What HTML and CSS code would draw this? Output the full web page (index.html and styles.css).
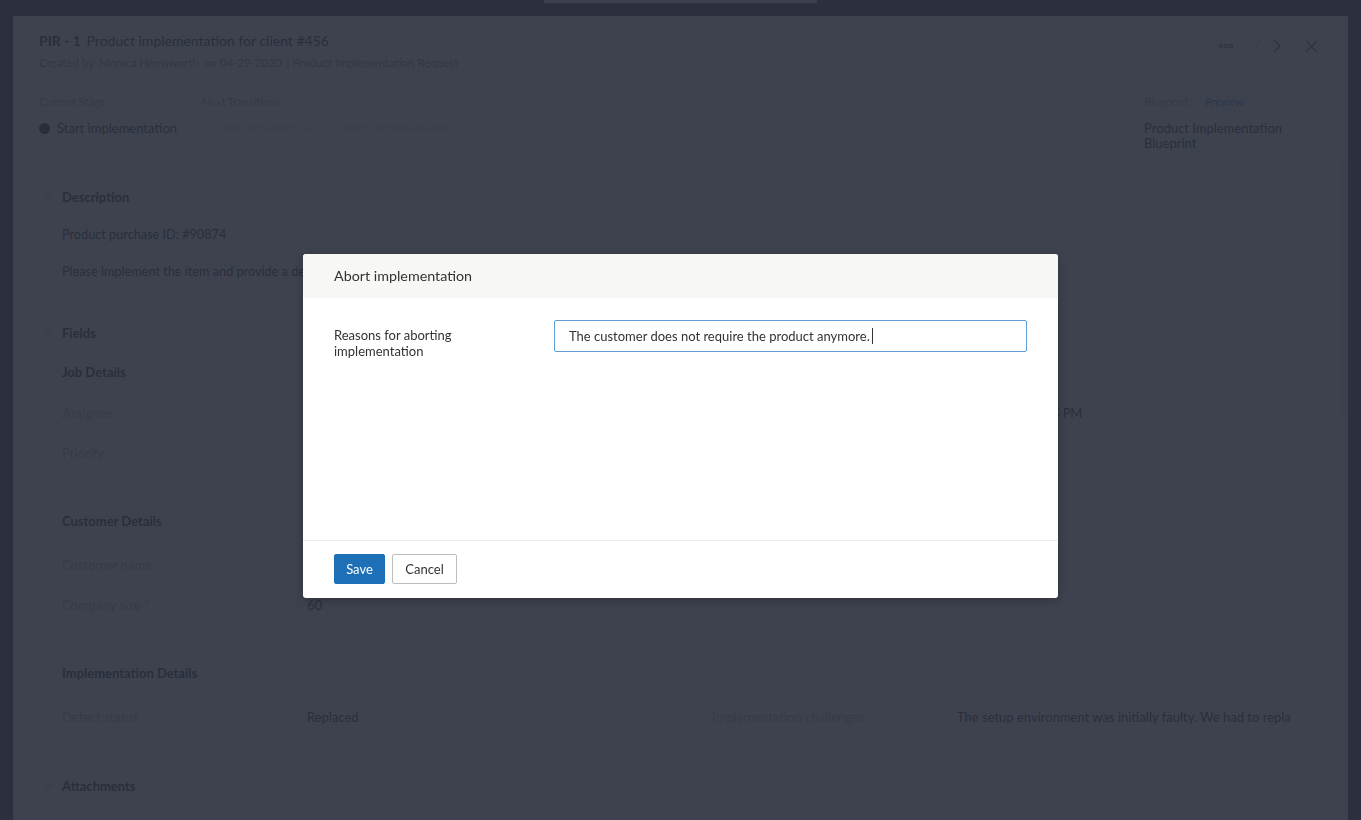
FILE: index.html
```html
<!DOCTYPE html>
<html lang="en">
<head>
<meta charset="utf-8">
<title>PIR - 1 Product implementation for client #456</title>
<link rel="stylesheet" href="styles.css">
</head>
<body>
<div class="top-strip"><span class="tab"></span></div>
<div class="panel">
  <header class="rec-head">
    <div class="rec-title-block">
      <div class="rec-title"><b>PIR - 1</b> Product implementation for client #456</div>
      <div class="rec-sub"><span>Created by</span><span>Monica Hemsworth</span><span>on 04-29-2020</span><span>| Product Implementation Request</span></div>
    </div>
    <div class="rec-actions">
      <svg class="ic-dots" width="14" height="6" viewBox="0 0 14 6"><circle cx="2" cy="3" r="1.6"/><circle cx="7" cy="3" r="1.6"/><circle cx="12" cy="3" r="1.6"/></svg>
      <span class="vdiv first"></span>
      <svg class="ic-prev" width="8" height="14" viewBox="0 0 8 14"><polyline points="7,1 1,7 7,13"/></svg>
      <svg class="ic-next" width="8" height="14" viewBox="0 0 8 14"><polyline points="1,1 7,7 1,13"/></svg>
      <span class="vdiv second"></span>
      <svg class="ic-close" width="13" height="13" viewBox="0 0 13 13"><line x1="1" y1="1" x2="12" y2="12"/><line x1="12" y1="1" x2="1" y2="12"/></svg>
    </div>
  </header>

  <div class="stage">
    <div class="stage-col current">
      <div class="stage-label">Current Stage</div>
      <div class="stage-value"><span class="dot"></span>Start implementation</div>
    </div>
    <div class="stage-col next">
      <div class="stage-label">Next Transitions</div>
      <div class="stage-value transitions"><span class="trans">Check dependencies</span><span class="trans">Abort implementation</span></div>
    </div>
    <div class="stage-col blueprint">
      <div class="stage-label">Blueprint <span class="sep">-</span> <span class="link">Preview</span></div>
      <div class="stage-value bp-name">Product Implementation Blueprint</div>
    </div>
  </div>

  <section class="sec sec-desc">
    <div class="sec-head"><svg class="chev" width="10" height="6" viewBox="0 0 10 6"><polyline points="1,1 5,5 9,1"/></svg><span>Description</span></div>
    <div class="sec-body">
      <p class="desc-line">Product purchase ID: #90874</p>
      <p class="desc-line">Please implement the item and provide a demo to the customer once the setup has been completed and verified.</p>
    </div>
  </section>

  <section class="sec sec-fields">
    <div class="sec-head"><svg class="chev" width="10" height="6" viewBox="0 0 10 6"><polyline points="1,1 5,5 9,1"/></svg><span>Fields</span></div>
    <div class="sec-body">
      <div class="group first">
        <h4 class="group-title">Job Details</h4>
        <div class="field-grid">
          <div class="field"><span class="f-label">Assignee</span><span class="f-value">Chris Evans</span></div>
          <div class="field"><span class="f-label">Due date</span><span class="f-value tight">04-30-2020 06:15 PM</span></div>
          <div class="field"><span class="f-label">Priority</span><span class="f-value">High</span></div>
          <div class="field empty"></div>
        </div>
      </div>
      <div class="group">
        <h4 class="group-title">Customer Details</h4>
        <div class="field-grid">
          <div class="field"><span class="f-label">Customer name</span><span class="f-value">Zylker Inc</span></div>
          <div class="field empty"></div>
          <div class="field"><span class="f-label">Company size <i class="req">*</i></span><span class="f-value">60</span></div>
          <div class="field empty"></div>
        </div>
      </div>
      <div class="group">
        <h4 class="group-title">Implementation Details</h4>
        <div class="field-grid">
          <div class="field"><span class="f-label">Defect status</span><span class="f-value">Replaced</span></div>
          <div class="field"><span class="f-label">Implementation challenges</span><span class="f-value clip">The setup environment was initially faulty. We had to replace the hardware before continuing.</span></div>
        </div>
      </div>
    </div>
  </section>

  <section class="sec sec-attach">
    <div class="sec-head"><svg class="chev" width="10" height="6" viewBox="0 0 10 6"><polyline points="1,1 5,5 9,1"/></svg><span>Attachments</span></div>
    <div class="sec-body">
      <div class="cards">
        <div class="card"></div><div class="card"></div><div class="card"></div><div class="card"></div>
      </div>
    </div>
  </section>

  <div class="scroll-thumb"></div>
</div>

<div class="overlay">
  <div class="modal">
    <div class="modal-head">Abort implementation</div>
    <div class="modal-body">
      <label class="m-label">Reasons for aborting implementation</label>
      <div class="m-input">The customer does not require the product anymore.<span class="caret"></span></div>
    </div>
    <div class="modal-foot">
      <button class="btn btn-primary">Save</button>
      <button class="btn btn-default">Cancel</button>
    </div>
  </div>
</div>
</body>
</html>
```

FILE: styles.css
```css
* { box-sizing: border-box; }

html, body {
  margin: 0;
  padding: 0;
  height: 820px;
  overflow: hidden;
}

body {
  background: #474c58;
  font-family: Lato, "Open Sans", "Liberation Sans", sans-serif;
  color: #333;
  font-size: 13px;
}

.top-strip {
  height: 16px;
  display: flex;
  justify-content: center;
}
.top-strip .tab {
  width: 273px;
  height: 3px;
  background: #eaeaea;
}

.panel {
  position: relative;
  margin-left: 13px;
  width: 1335px;
  height: 804px;
  background: #fff;
  overflow: hidden;
}

/* header */
.rec-head {
  display: flex;
  justify-content: space-between;
  align-items: flex-start;
  padding: 16px 26px 0 26px;
}
.rec-title {
  font-size: 14px;
  line-height: 18px;
  color: #333;
}
.rec-title b { font-weight: 700; margin-right: 2px; }
.rec-sub {
  margin-top: 6px;
  font-size: 11.5px;
  line-height: 14px;
  color: #8a8a8a;
  display: flex;
  gap: 5px;
}
.rec-actions {
  display: flex;
  align-items: center;
  margin-top: 5px;
  margin-right: 4px;
}
.ic-dots { fill: none; stroke: #666; stroke-width: 1.1; }
.vdiv {
  width: 1px;
  height: 18px;
  background: #e3e3e3;
}
.vdiv.first { margin: 0 9px 0 11px; }
.vdiv.second { margin: 0 12px 0 11px; }
.ic-prev, .ic-next, .ic-close { fill: none; stroke-width: 1.3; }
.ic-prev { stroke: #cfcfcf; }
.ic-next { stroke: #555; margin-left: 11px; }
.ic-close { stroke: #666; }

/* stage */
.stage {
  margin-top: 16px;
  height: 74px;
  border-top: 1px solid #f0f0f0;
  padding: 8px 0 0 26px;
  display: flex;
  align-items: flex-start;
}
.stage-col.current {
  width: 150px;
  border-right: 1px solid #efefef;
  height: 52px;
}
.stage-col.next {
  flex: 1;
  padding-left: 13px;
}
.stage-col.blueprint {
  width: 189px;
  margin-right: 26px;
  padding-left: 10px;
  border-left: 1px solid #efefef;
  height: 58px;
}
.stage-label {
  font-size: 11px;
  line-height: 14px;
  color: #9a9a9a;
}
.stage-label .sep { color: #9a9a9a; margin: 0 2px 0 5px; }
.stage-label .link { color: #2f7fcf; }
.stage-value {
  margin-top: 11px;
  font-size: 13px;
  line-height: 16px;
  color: #333;
  display: flex;
  align-items: center;
}
.dot {
  width: 11px;
  height: 11px;
  border-radius: 50%;
  background: #333;
  margin-right: 7px;
  flex: none;
}
.transitions { gap: 23px; padding-left: 10px; font-size: 11.6px; }
.trans { color: #d2d2d2; }
.bp-name { display: block; width: 165px; line-height: 15px; margin-top: 11.5px; }

/* sections */
.sec { padding-left: 31px; padding-right: 35px; }
.sec-desc { margin-top: 29px; }
.sec-fields { margin-top: 46px; }
.sec-attach { margin-top: 41px; }
.sec-head {
  display: flex;
  align-items: center;
  font-size: 13px;
  line-height: 16px;
  font-weight: 700;
  color: #333;
}
.chev {
  fill: none;
  stroke: #c4c4c4;
  stroke-width: 1.1;
  margin-right: 8px;
  flex: none;
}
.sec-body { padding-left: 18px; }
.desc-line {
  margin: 21px 0 0 0;
  line-height: 16px;
  font-size: 12.7px;
  color: #333;
  white-space: nowrap;
}

.group { margin-top: 40px; }
.group.first { margin-top: 23px; }
.group-title {
  margin: 0;
  font-size: 13px;
  line-height: 16px;
  font-weight: 700;
  color: #333;
}
.group.first .field-grid { margin-top: 13px; }
.field-grid {
  margin-top: 16px;
  display: grid;
  grid-template-columns: 588px 588px;
  column-gap: 62px;
}
.field {
  display: flex;
  padding: 12px 0 11px 0;
  border-bottom: 1px solid #f1f1f1;
  line-height: 16px;
  min-width: 0;
}
.field.empty { border-bottom-color: transparent; }
.f-label {
  width: 245px;
  flex: none;
  color: #a9a9a9;
}
.f-value {
  color: #333;
  white-space: nowrap;
  overflow: hidden;
  min-width: 0;
}
.f-value.tight { letter-spacing: -0.25px; }
.f-value.clip { width: 334px; flex: none; }
.req { font-style: normal; color: #a9a9a9; }

.cards {
  margin-top: 21px;
  display: flex;
  gap: 10px;
}
.card {
  width: 240px;
  height: 60px;
  border: 1px solid #e8e8e8;
  border-radius: 3px;
}

.scroll-thumb {
  position: absolute;
  right: 1px;
  top: 144px;
  width: 6px;
  height: 258px;
  background: #e9e9e9;
  border-radius: 3px;
}

/* overlay + modal */
.overlay {
  position: fixed;
  inset: 0;
  background: rgba(41, 46, 60, 0.9);
  display: flex;
  justify-content: center;
  align-items: flex-start;
  padding-top: 254px;
}
.modal {
  width: 755px;
  background: #fff;
  border-radius: 3px;
  overflow: hidden;
  box-shadow: 0 2px 10px rgba(0, 0, 0, 0.25);
}
.modal-head {
  height: 44px;
  background: #f7f7f4;
  padding: 0 0 1px 31px;
  display: flex;
  align-items: center;
  font-size: 14.3px;
  color: #333;
}
.modal-body {
  height: 243px;
  padding: 22px 31px 0 31px;
  display: flex;
  align-items: flex-start;
  border-bottom: 1px solid #ececec;
}
.m-label {
  width: 190px;
  margin-right: 30px;
  margin-top: 7px;
  font-size: 13px;
  line-height: 16px;
  color: #333;
}
.m-input {
  width: 473px;
  height: 32px;
  border: 1px solid #5d9fd6;
  border-radius: 2px;
  padding: 0 14px;
  display: flex;
  align-items: center;
  font-size: 13px;
  color: #333;
  white-space: nowrap;
}
.caret {
  display: inline-block;
  width: 1px;
  height: 16px;
  background: #333;
  margin-left: 2px;
}
.modal-foot {
  height: 57px;
  padding: 13px 31px 0 31px;
  display: flex;
  gap: 7px;
  align-items: flex-start;
}
.btn {
  height: 30px;
  font-family: Lato, "Open Sans", "Liberation Sans", sans-serif;
  font-size: 13px;
  border-radius: 2px;
  cursor: pointer;
}
.btn-primary {
  width: 51px;
  background: #1d6fb6;
  border: 1px solid #1d6fb6;
  color: #fff;
}
.btn-default {
  width: 65px;
  background: #fff;
  border: 1px solid #bdbdbd;
  color: #333;
}
```
